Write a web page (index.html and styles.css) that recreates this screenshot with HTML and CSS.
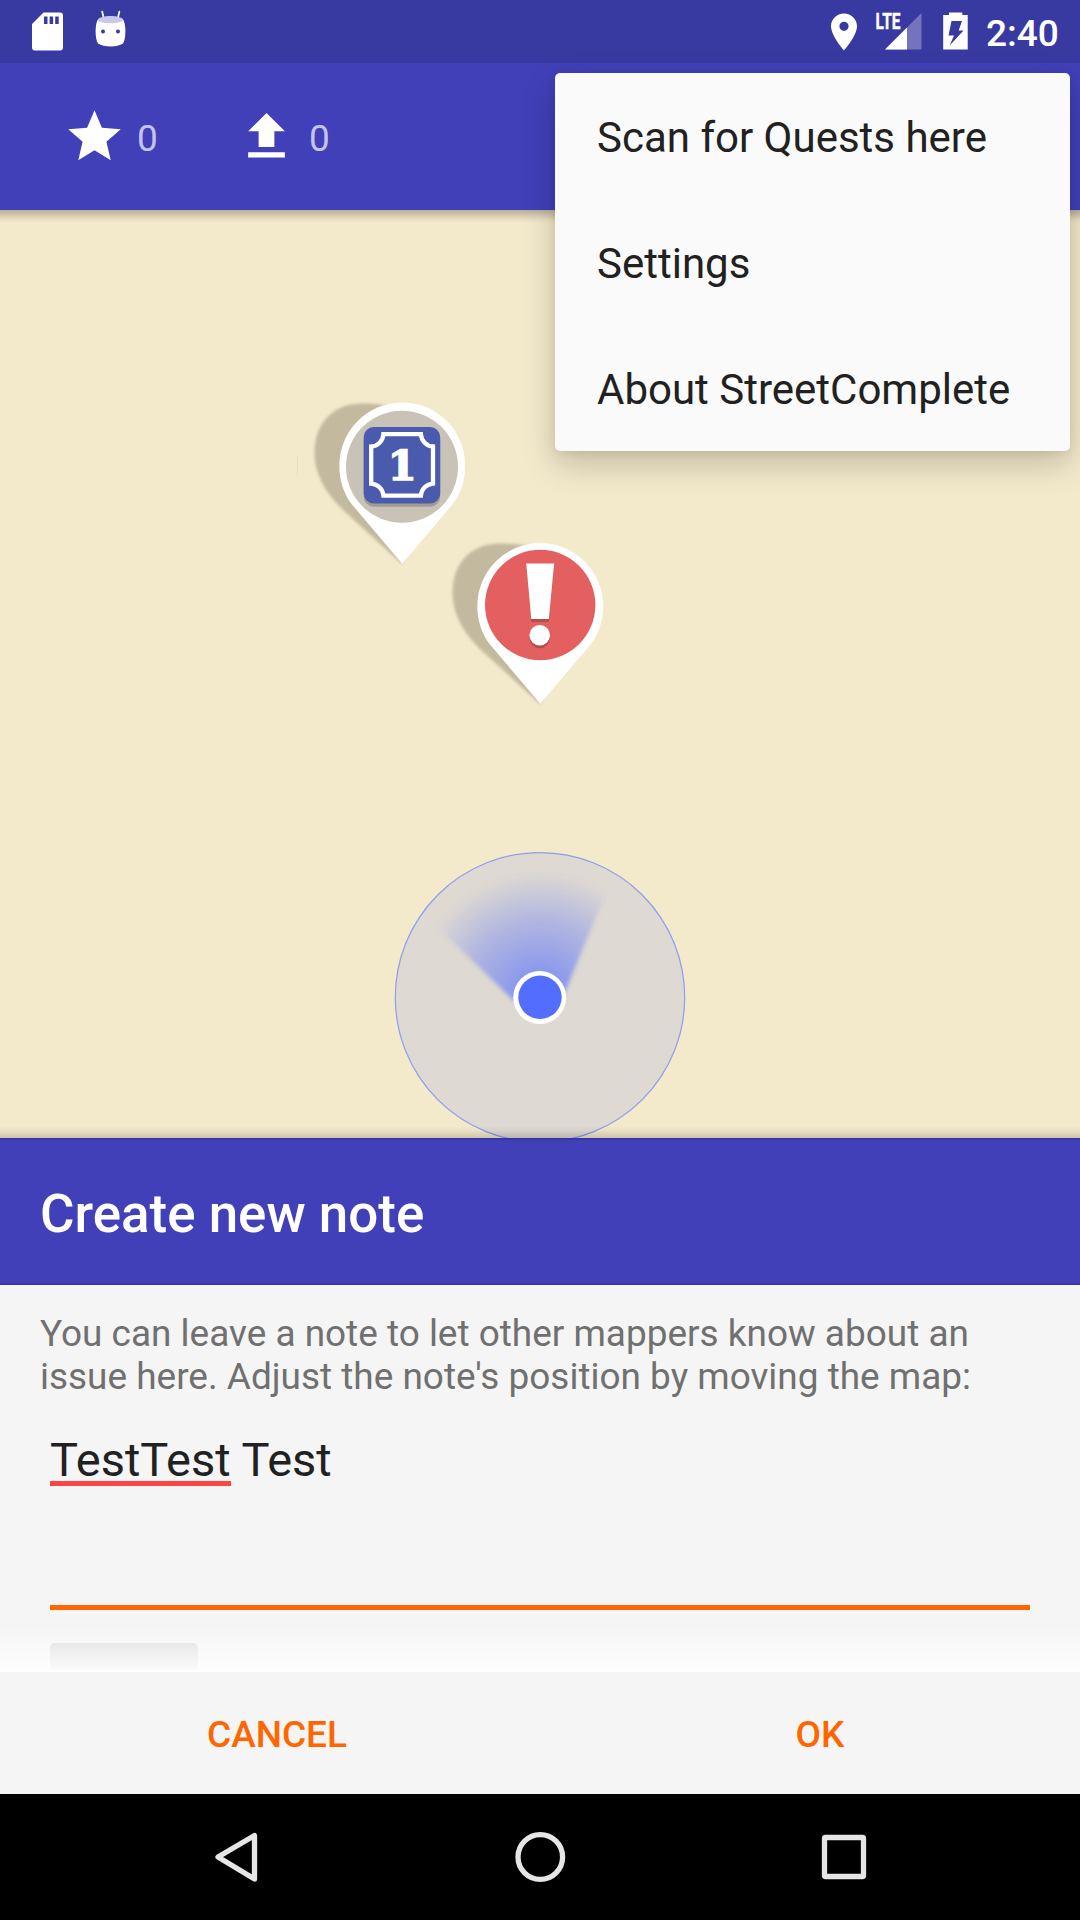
FILE: index.html
```html
<!DOCTYPE html>
<html lang="en">
<head>
<meta charset="utf-8">
<title>StreetComplete</title>
<link rel="stylesheet" href="styles.css">
</head>
<body>
<div class="screen">
  <header class="status-bar">
    <div class="status-group">
      <svg class="icon-sd" width="31" height="39" viewBox="0 -.5 31 39"><path fill="#fff" fill-rule="evenodd" d="M11.500 0H28a3 3 0 0 1 3 3v32a3 3 0 0 1-3 3H3a3 3 0 0 1-3-3V11.500zM12 4v7.500h3.500V4zm5.600 0v7.500h3.500V4zm5.600 0v7.500h3.500V4z"/></svg>
      <svg class="icon-droid" width="32" height="38" viewBox="95 10 32 38">
        <path d="M102.200 11.500l1.600 7M119.400 11.500l-1.600 7" stroke="#fff" stroke-width="1.700" stroke-linecap="round"/>
        <path fill="#fff" d="M98.500 19C95 22 94.500 38 98 43.500C104 47.500 117 47.500 123 43.500C126.500 38 126 22 122.500 19Q110.500 14 98.500 19z"/>
        <ellipse cx="110.500" cy="19.700" rx="12.500" ry="3.600" fill="#c9c8e6"/>
        <circle cx="103" cy="31.500" r="2" fill="#3939a2"/><circle cx="118" cy="31.500" r="2" fill="#3939a2"/>
      </svg>
    </div>
    <div class="status-group">
      <svg class="icon-place" width="26" height="38" viewBox="0 -.5 26 38"><path fill="#fff" fill-rule="evenodd" d="M13 0C5.800 0 0 5.700 0 12.800C0 22.400 13 37 13 37S26 22.400 26 12.800C26 5.700 20.200 0 13 0zm0 17.400a4.600 4.600 0 1 1 0-9.200a4.600 4.600 0 0 1 0 9.200z"/></svg>
      <svg class="icon-signal" width="50" height="46" viewBox="872 4 50 46">
        <path fill="#fff" fill-opacity=".3" d="M921.500 13V49.500H885z"/>
        <path fill="#fff" d="M907 27.500V49.500H885z"/>
        <text class="lte" x="875.500" y="29.200" textLength="25" lengthAdjust="spacingAndGlyphs">LTE</text>
      </svg>
      <svg class="icon-battery" width="25" height="38" viewBox="943 12 25 38"><path fill="#fff" fill-rule="evenodd" d="M949 12.500h13.300V15h5.400v34.600h-24.500V15h5.800zM951.500 21l-3 14.500h5.500l-4.300 10l13.800-15h-4.800l3.300-9.500z"/></svg>
      <span class="clock">2:40</span>
    </div>
  </header>

  <div class="toolbar">
    <div class="counter">
      <svg width="63" height="63" viewBox="0 0 24 24"><path fill="#fff" d="M12 17.270L18.180 21l-1.640-7.030L22 9.240l-7.190-.61L12 2 9.190 8.630 2 9.240l5.460 4.730L5.820 21z"/></svg>
      <span>0</span>
    </div>
    <div class="counter">
      <svg width="63" height="63" viewBox="0 0 24 24"><path fill="#fff" d="M9 16h6v-6h4l-7-7-7 7h4zm-4 2h14v2H5z"/></svg>
      <span>0</span>
    </div>
  </div>

  <main class="map">
    <div class="map-seam"></div>
    <svg class="pin pin-quest" width="160" height="170" viewBox="310 398 160 170">
      <defs><filter id="soft" x="-10%" y="-10%" width="120%" height="120%"><feGaussianBlur stdDeviation="1.500"/></filter></defs>
      <path class="pin-shadow" filter="url(#soft)" d="M402 564L341 508C324 491 314.500 472 314.500 453C314.500 423 333 403.500 362 403.500C378 403.500 400 406 412 413L430 500z"/>
      <path fill="#fff" d="M402.200 563.700L352 504.500C343.500 494 339.300 480 339.300 465.500A62.950 62.950 0 0 1 465.200 465.500C465.200 480 461 494 452.500 504.500z"/>
      <circle cx="402" cy="466.700" r="56" fill="#c8c3b6"/>
      <rect x="363.700" y="430.200" width="76.500" height="76.500" rx="10" fill="#a09c92"/>
      <rect x="363.700" y="427" width="76.500" height="76.500" rx="10" fill="#4a5aad"/>
      <path fill="none" stroke="#fff" stroke-width="4.300" d="M383.400 434.200H420.900A13 13 0 0 0 433 446.500V483.600A13 13 0 0 0 420.900 495.600H383.400A13 13 0 0 0 371.200 483.600V446.500A13 13 0 0 0 383.400 434.200z"/>
      <text class="pin-number" x="402.300" y="479.800" text-anchor="middle">1</text>
    </svg>
    <svg class="pin pin-note" width="160" height="170" viewBox="310 398 160 170">
      <path class="pin-shadow" filter="url(#soft)" d="M402 564L341 508C324 491 314.500 472 314.500 453C314.500 423 333 403.500 362 403.500C378 403.500 400 406 412 413L430 500z"/>
      <path fill="#fff" d="M402.200 563.700L352 504.500C343.500 494 339.300 480 339.300 466A62.950 62.950 0 0 1 465.200 466C465.200 480 461 494 452.500 504.500z"/>
      <circle cx="402.200" cy="465" r="55.200" fill="#e46060"/>
      <g fill="#b64c4c"><path d="M388.200 426.500h28l-5.300 55.500h-17.700z"/><circle cx="401.700" cy="498" r="10.300"/></g>
      <g fill="#fff"><path d="M388.200 423.500h28l-5.300 55.500h-17.700z"/><circle cx="401.700" cy="495.200" r="10.300"/></g>
    </svg>
    <svg class="location" width="292" height="292" viewBox="394 851 292 292">
      <defs>
        <radialGradient id="beam" gradientUnits="userSpaceOnUse" cx="540" cy="997.500" r="126"><stop offset=".2" stop-color="#536dfe" stop-opacity=".6"/><stop offset=".6" stop-color="#536dfe" stop-opacity=".33"/><stop offset="1" stop-color="#536dfe" stop-opacity="0"/></radialGradient>
        <filter id="edge"><feGaussianBlur stdDeviation="2"/></filter>
      </defs>
      <circle cx="540" cy="997.300" r="144.700" fill="#ded9d2" stroke="#8d9df0" stroke-width="1.200"/>
      <path filter="url(#edge)" fill="url(#beam)" d="M514 1001L428 918L520 850L614 873L565 992z"/>
      <circle cx="539.700" cy="997.400" r="26.500" fill="#fff"/>
      <circle cx="540" cy="997.300" r="21.700" fill="#536dfe"/>
    </svg>
  </main>

  <section class="sheet">
    <h1 class="sheet-title">Create new note</h1>
    <div class="sheet-body">
      <p class="hint">You can leave a note to let other mappers know about an<br>issue here. Adjust the note's position by moving the map:</p>
      <div class="note-input"><span class="misspelled">TestTest</span> Test</div>
      <div class="attach"></div>
      <div class="fade"></div>
    </div>
    <div class="actions">
      <span class="action">CANCEL</span>
      <span class="action">OK</span>
    </div>
  </section>

  <nav class="nav-bar">
    <svg width="50" height="52" viewBox="0 0 50 52"><path d="M42.500 4.500V48L6 26z"/></svg>
    <svg width="52" height="52" viewBox="0 0 52 52"><circle cx="25.300" cy="26" r="22.300"/></svg>
    <svg width="50" height="52" viewBox="0 0 50 52"><rect x="5.500" y="6.500" width="39" height="39" rx="1"/></svg>
  </nav>

  <div class="menu">
    <div class="menu-item">Scan for Quests here</div>
    <div class="menu-item">Settings</div>
    <div class="menu-item">About StreetComplete</div>
  </div>
</div>
</body>
</html>
```
FILE: styles.css
```css
* { box-sizing: border-box; }
body { margin: 0; font-family: Roboto, "Noto Sans", sans-serif; }
svg { display: block; flex: none; }
.screen {
  position: relative;
  display: flex;
  flex-direction: column;
  width: 1080px;
  height: 1920px;
  overflow: hidden;
  background: #f3e9cb;
}

.status-bar {
  display: flex;
  justify-content: space-between;
  height: 63px;
  padding: 0 21px 0 32px;
  background: #3939a2;
}
.status-group { display: flex; align-items: flex-start; }
.icon-sd { margin-top: 12px; }
.icon-droid { margin: 10px 0 0 32px; }
.icon-place { margin: 13px 15px 0 0; }
.icon-signal { margin: 4px 21px 0 0; }
.icon-battery { margin: 12px 18px 0 0; }
.lte { font: 700 22.500px Roboto, sans-serif; fill: #fff; stroke: #fff; stroke-width: .4px; }
.clock { width: 73px; margin-top: 12px; font-size: 37px; font-weight: 500; line-height: 44px; color: #fff; white-space: nowrap; }

.toolbar {
  position: relative;
  z-index: 1;
  display: flex;
  gap: 46px;
  height: 147px;
  padding: 42px 0 0 63px;
  background: #4140b8;
}
.toolbar::after {
  content: "";
  position: absolute;
  left: 0;
  right: 0;
  top: 147px;
  height: 13px;
  background: linear-gradient(rgba(0, 0, 0, .25), rgba(0, 0, 0, .05) 70%, rgba(0, 0, 0, 0));
}
.counter { display: flex; width: 126px; gap: 11px; font-size: 37px; line-height: 68px; color: rgba(255, 255, 255, .7); }

.map { position: relative; height: 928px; overflow: hidden; background: #f3e9cb; }
.map-seam { position: absolute; left: 297px; top: 245px; width: 1px; height: 20px; background: #e5dcc0; }
.pin { position: absolute; }
.pin-quest { left: 310px; top: 188px; }
.pin-note { left: 448px; top: 328px; }
.pin-shadow { fill: #c2b99f; }
.pin-number { font: 700 41.500px "DejaVu Serif", serif; fill: #fff; stroke: #fff; stroke-width: 1.600px; }
.location { position: absolute; left: 394px; top: 641px; }

.sheet { position: relative; display: flex; flex-direction: column; height: 656px; background: #f5f5f5; }
.sheet::before {
  content: "";
  position: absolute;
  left: 0;
  right: 0;
  top: -12px;
  height: 12px;
  background: linear-gradient(rgba(0, 0, 0, 0), rgba(0, 0, 0, .04) 40%, rgba(0, 0, 0, .16));
}
.sheet-title {
  height: 147px;
  margin: 0;
  padding-left: 40px;
  border: solid #3838a2;
  border-width: 2px 0;
  background: #4140b8;
  color: #fff;
  font-size: 52.900px;
  font-weight: 500;
  line-height: 149px;
}
.sheet-body { position: relative; height: 387px; padding: 27px 50px 0; overflow: hidden; }
.hint { margin: 0 -10px; color: #707070; font-size: 36.950px; line-height: 43px; white-space: nowrap; }
.note-input {
  height: 180px;
  margin-top: 32px;
  border-bottom: 5px solid #ff6600;
  color: #212121;
  font-size: 47px;
  line-height: 60px;
}
.misspelled { display: inline-block; height: 56px; border-bottom: 5px solid #ff4444; }
.attach { width: 148px; height: 60px; margin-top: 33px; border-radius: 5px; background: linear-gradient(#dbdddc, #e4e4e4 27px); }
.fade { position: absolute; left: 0; right: 0; bottom: 0; height: 47px; background: linear-gradient(rgba(255, 255, 255, 0), rgba(255, 255, 255, .82) 95%, #fff 96%); }
.actions { display: grid; grid-template-columns: 526px 520px; column-gap: 20px; height: 122px; padding-left: 14px; }
.action { color: #ff6600; font-size: 37px; font-weight: 500; line-height: 126px; text-align: center; }

.nav-bar { display: flex; justify-content: space-between; align-items: center; height: 126px; padding: 0 211px 0 212px; background: #000; }
.nav-bar svg { fill: none; stroke: #e6e6e6; stroke-width: 5.300; stroke-linejoin: round; }

.menu {
  position: absolute;
  z-index: 2;
  left: 555px;
  top: 73px;
  width: 515px;
  height: 378px;
  border-radius: 5px;
  background: #fafafa;
  box-shadow: 0 13px 34px rgba(0, 0, 0, .2), 0 2px 10px rgba(0, 0, 0, .07);
}
.menu-item { height: 126px; padding-left: 42px; color: #212121; font-size: 42px; line-height: 129px; white-space: nowrap; }
```
